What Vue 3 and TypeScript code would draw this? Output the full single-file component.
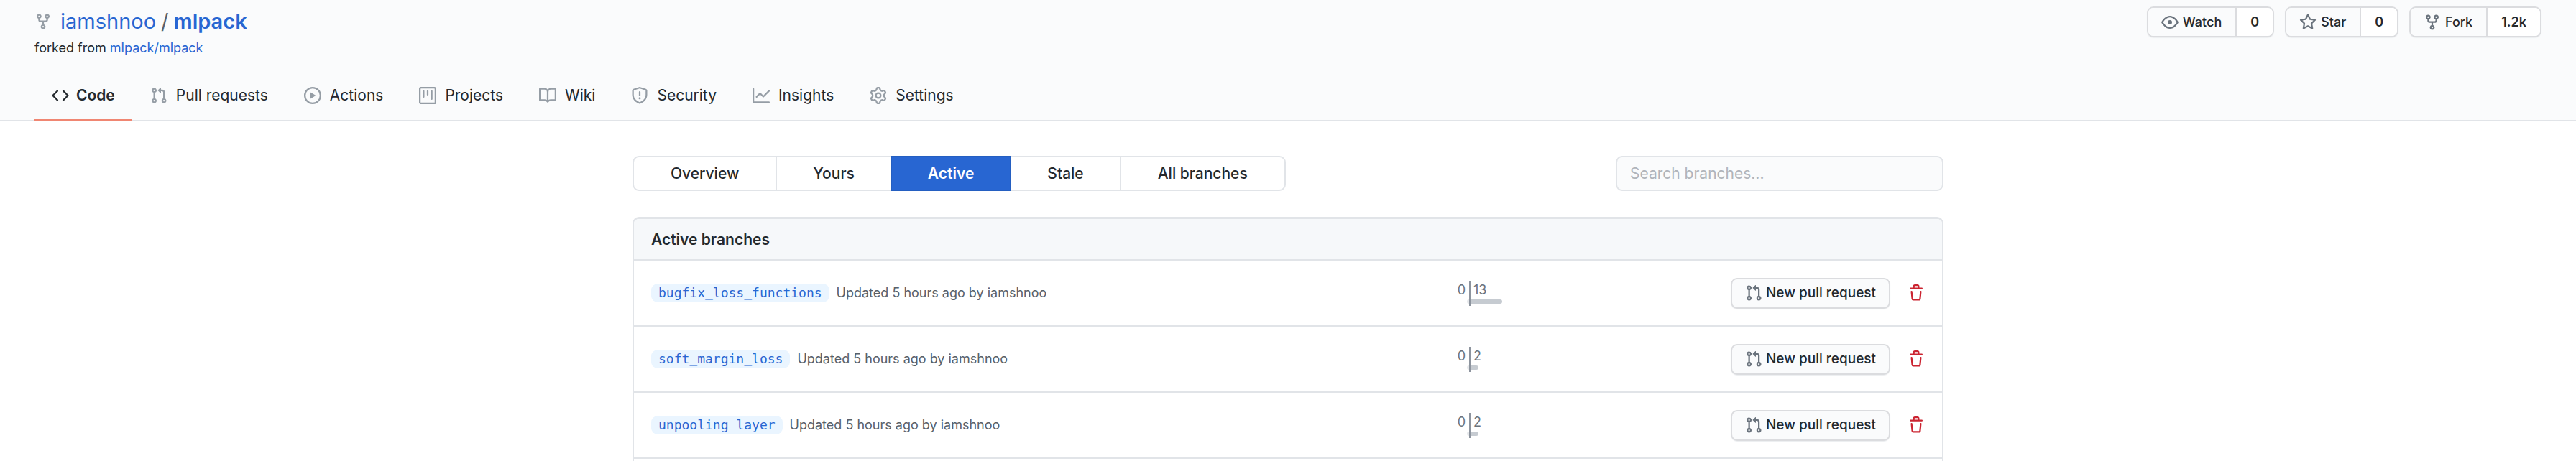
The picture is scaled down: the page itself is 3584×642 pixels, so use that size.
<script setup lang="ts">
import { ref } from 'vue'

const icons = {
  fork: 'M5 3.25a.75.75 0 11-1.5 0 .75.75 0 011.5 0zm0 2.122a2.25 2.25 0 10-1.5 0v.878A2.25 2.25 0 005.75 8.5h1.5v2.128a2.251 2.251 0 101.5 0V8.5h1.5a2.25 2.25 0 002.25-2.25v-.878a2.25 2.25 0 10-1.5 0v.878a.75.75 0 01-.75.75h-4.5A.75.75 0 015 6.25v-.878zm3.75 7.378a.75.75 0 11-1.5 0 .75.75 0 011.5 0zm3-8.75a.75.75 0 100-1.5.75.75 0 000 1.5z',
  code: 'M4.72 3.22a.75.75 0 011.06 1.06L2.06 8l3.72 3.72a.75.75 0 11-1.06 1.06L.47 8.53a.75.75 0 010-1.06l4.25-4.25zm6.56 0a.75.75 0 10-1.06 1.06L13.94 8l-3.72 3.72a.75.75 0 101.06 1.06l4.25-4.25a.75.75 0 000-1.06l-4.25-4.25z',
  pull: 'M7.177 3.073L9.573.677A.25.25 0 0110 .854v4.792a.25.25 0 01-.427.177L7.177 3.427a.25.25 0 010-.354zM3.75 2.5a.75.75 0 100 1.5.75.75 0 000-1.5zm-2.25.75a2.25 2.25 0 113 2.122v5.256a2.251 2.251 0 11-1.5 0V5.372A2.25 2.25 0 011.5 3.25zM11 2.5h-1V4h1a1 1 0 011 1v5.628a2.251 2.251 0 101.5 0V5A2.5 2.5 0 0011 2.5zm1 10.25a.75.75 0 111.5 0 .75.75 0 01-1.5 0zM3.75 12a.75.75 0 100 1.5.75.75 0 000-1.5z',
  play: 'M1.5 8a6.5 6.5 0 1113 0 6.5 6.5 0 01-13 0zM8 0a8 8 0 100 16A8 8 0 008 0zM6.379 5.227A.25.25 0 006 5.442v5.117a.25.25 0 00.379.214l4.264-2.559a.25.25 0 000-.428L6.379 5.227z',
  project: 'M1.75 0A1.75 1.75 0 000 1.75v12.5C0 15.216.784 16 1.75 16h12.5A1.75 1.75 0 0016 14.25V1.75A1.75 1.75 0 0014.25 0H1.75zM1.5 1.75a.25.25 0 01.25-.25h12.5a.25.25 0 01.25.25v12.5a.25.25 0 01-.25.25H1.75a.25.25 0 01-.25-.25V1.75zM11.75 3a.75.75 0 00-.75.75v7.5a.75.75 0 001.5 0v-7.5a.75.75 0 00-.75-.75zm-8.25.75a.75.75 0 011.5 0v5.5a.75.75 0 01-1.5 0v-5.5zM8 3a.75.75 0 00-.75.75v3.5a.75.75 0 001.5 0v-3.5A.75.75 0 008 3z',
  book: 'M0 1.75A.75.75 0 01.75 1h4.253c1.227 0 2.317.59 3 1.501A3.744 3.744 0 0111.006 1h4.245a.75.75 0 01.75.75v10.5a.75.75 0 01-.75.75h-4.507a2.25 2.25 0 00-1.591.659l-.622.621a.75.75 0 01-1.06 0l-.622-.621A2.25 2.25 0 005.258 13H.75a.75.75 0 01-.75-.75V1.75zm8.755 3a2.25 2.25 0 012.25-2.25H14.5v9h-3.757c-.71 0-1.4.201-1.992.572l.004-7.322zm-1.504 7.324l.004-5.073-.002-2.253A2.25 2.25 0 005.003 2.5H1.5v9h3.757a3.75 3.75 0 011.994.574z',
  shield: 'M7.467.133a1.75 1.75 0 011.066 0l5.25 1.68A1.75 1.75 0 0115 3.48V7c0 1.566-.32 3.182-1.303 4.682-.983 1.498-2.585 2.813-5.032 3.855a1.7 1.7 0 01-1.33 0c-2.447-1.042-4.049-2.357-5.032-3.855C1.32 10.182 1 8.566 1 7V3.48a1.75 1.75 0 011.217-1.667l5.25-1.68zm.61 1.429a.25.25 0 00-.153 0l-5.25 1.68a.25.25 0 00-.174.238V7c0 1.358.275 2.666 1.057 3.86.784 1.194 2.121 2.34 4.366 3.297a.2.2 0 00.154 0c2.245-.956 3.582-2.104 4.366-3.298C13.225 9.666 13.5 8.36 13.5 7V3.48a.25.25 0 00-.174-.237l-5.25-1.68zM9 10.5a1 1 0 11-2 0 1 1 0 012 0zm-.25-5.75a.75.75 0 10-1.5 0v3a.75.75 0 001.5 0v-3z',
  graph: 'M1.5 1.75a.75.75 0 00-1.5 0v12.5c0 .414.336.75.75.75h14.5a.75.75 0 000-1.5H1.5V1.75zm14.28 2.53a.75.75 0 00-1.06-1.06L10 7.94 7.53 5.47a.75.75 0 00-1.06 0L3.22 8.72a.75.75 0 001.06 1.06L7 7.06l2.47 2.47a.75.75 0 001.06 0l5.25-5.25z',
  gear: 'M7.429 1.525a6.593 6.593 0 011.142 0c.036.003.108.036.137.146l.289 1.105c.147.56.55.967.997 1.189.174.086.341.183.501.29.417.278.97.423 1.53.27l1.102-.303c.11-.03.175.016.195.046.219.31.41.641.573.989.014.031.022.11-.059.19l-.815.806c-.411.406-.562.957-.53 1.456a4.588 4.588 0 010 .582c-.032.499.119 1.05.53 1.456l.815.806c.08.08.073.159.059.19a6.494 6.494 0 01-.573.99c-.02.029-.086.074-.195.045l-1.103-.303c-.559-.153-1.112-.008-1.529.27-.16.107-.327.204-.5.29-.449.222-.851.628-.998 1.189l-.289 1.105c-.029.11-.101.143-.137.146a6.613 6.613 0 01-1.142 0c-.036-.003-.108-.037-.137-.146l-.289-1.105c-.147-.56-.55-.967-.997-1.189a4.502 4.502 0 01-.501-.29c-.417-.278-.97-.423-1.53-.27l-1.102.303c-.11.03-.175-.016-.195-.046a6.492 6.492 0 01-.573-.989c-.014-.031-.022-.11.059-.19l.815-.806c.411-.406.562-.957.53-1.456a4.587 4.587 0 010-.582c.032-.499-.119-1.05-.53-1.456l-.815-.806c-.08-.08-.073-.159-.059-.19a6.44 6.44 0 01.573-.99c.02-.029.086-.075.195-.045l1.103.303c.559.153 1.112.008 1.529-.27.16-.107.327-.204.5-.29.449-.222.851-.628.998-1.189l.289-1.105c.029-.11.101-.143.137-.146zM8 0c-.236 0-.47.01-.701.03-.743.065-1.29.615-1.458 1.261l-.29 1.106c-.017.066-.078.158-.211.224a5.994 5.994 0 00-.668.386c-.123.082-.233.09-.3.071L3.27 2.776c-.644-.177-1.392.02-1.82.63a7.977 7.977 0 00-.704 1.217c-.315.675-.111 1.422.363 1.891l.815.806c.05.048.098.147.088.294a6.084 6.084 0 000 .772c.01.147-.038.246-.088.294l-.815.806c-.474.469-.678 1.216-.363 1.891.2.428.436.835.704 1.218.428.609 1.176.806 1.82.63l1.103-.303c.066-.019.176-.011.299.071.213.143.436.272.668.386.133.066.194.158.212.224l.289 1.106c.169.646.715 1.196 1.458 1.26a8.094 8.094 0 001.402 0c.743-.064 1.29-.614 1.458-1.26l.29-1.106c.017-.066.078-.158.211-.224a5.98 5.98 0 00.668-.386c.123-.082.233-.09.3-.071l1.102.302c.644.177 1.392-.02 1.82-.63.268-.382.505-.789.704-1.217.315-.675.111-1.422-.364-1.891l-.814-.806c-.05-.048-.098-.147-.088-.294a6.1 6.1 0 000-.772c-.01-.147.039-.246.088-.294l.814-.806c.475-.469.679-1.216.364-1.891a7.992 7.992 0 00-.704-1.218c-.428-.609-1.176-.806-1.82-.63l-1.103.303c-.066.019-.176.011-.299-.071a5.991 5.991 0 00-.668-.386c-.133-.066-.194-.158-.212-.224L10.16 1.29C9.99.645 9.444.095 8.701.031A8.094 8.094 0 008 0zm1.5 8a1.5 1.5 0 11-3 0 1.5 1.5 0 013 0zM11 8a3 3 0 11-6 0 3 3 0 016 0z',
  eye: 'M1.679 7.932c.412-.621 1.242-1.75 2.366-2.717C5.175 4.242 6.527 3.5 8 3.5c1.473 0 2.824.742 3.955 1.715 1.124.967 1.954 2.096 2.366 2.717a.119.119 0 010 .136c-.412.621-1.242 1.75-2.366 2.717C10.825 11.758 9.473 12.5 8 12.5c-1.473 0-2.824-.742-3.955-1.715C2.92 9.818 2.09 8.69 1.679 8.068a.119.119 0 010-.136zM8 2c-1.981 0-3.67.992-4.933 2.078C1.797 5.169.88 6.423.43 7.1a1.619 1.619 0 000 1.798c.45.678 1.367 1.932 2.637 3.024C4.329 13.008 6.019 14 8 14c1.981 0 3.67-.992 4.933-2.078 1.27-1.091 2.187-2.345 2.637-3.023a1.619 1.619 0 000-1.798c-.45-.678-1.367-1.932-2.637-3.023C11.671 2.992 9.981 2 8 2zm0 8a2 2 0 100-4 2 2 0 000 4z',
  star: 'M8 .25a.75.75 0 01.673.418l1.882 3.815 4.21.612a.75.75 0 01.416 1.279l-3.046 2.97.719 4.192a.75.75 0 01-1.088.791L8 12.347l-3.766 1.98a.75.75 0 01-1.088-.79l.72-4.194L.818 6.374a.75.75 0 01.416-1.28l4.21-.611L7.327.668A.75.75 0 018 .25zm0 2.445L6.615 5.5a.75.75 0 01-.564.41l-3.097.45 2.24 2.184a.75.75 0 01.216.664l-.528 3.084 2.769-1.456a.75.75 0 01.698 0l2.77 1.456-.53-3.084a.75.75 0 01.216-.664l2.24-2.183-3.096-.45a.75.75 0 01-.564-.41L8 2.694v.001z',
  trash: 'M6.5 1.75a.25.25 0 01.25-.25h2.5a.25.25 0 01.25.25V3h-3V1.75zm4.5 0V3h2.25a.75.75 0 010 1.5H2.75a.75.75 0 010-1.5H5V1.75C5 .784 5.784 0 6.75 0h2.5C10.216 0 11 .784 11 1.75zM4.496 6.675a.75.75 0 10-1.492.15l.66 6.6A1.75 1.75 0 005.405 15h5.19c.9 0 1.652-.681 1.741-1.576l.66-6.6a.75.75 0 00-1.492-.149l-.66 6.6a.25.25 0 01-.249.225h-5.19a.25.25 0 01-.249-.225l-.66-6.6z',
}

type IconName = keyof typeof icons

interface Tab {
  label: string
  icon: IconName
}

interface SocialAction {
  label: string
  icon: IconName
  count: string
}

interface Branch {
  name: string
  behind: number
  ahead: number
  barWidth: number
}

const tabs: Tab[] = [
  { label: 'Code', icon: 'code' },
  { label: 'Pull requests', icon: 'pull' },
  { label: 'Actions', icon: 'play' },
  { label: 'Projects', icon: 'project' },
  { label: 'Wiki', icon: 'book' },
  { label: 'Security', icon: 'shield' },
  { label: 'Insights', icon: 'graph' },
  { label: 'Settings', icon: 'gear' },
]

const social: SocialAction[] = [
  { label: 'Watch', icon: 'eye', count: '0' },
  { label: 'Star', icon: 'star', count: '0' },
  { label: 'Fork', icon: 'fork', count: '1.2k' },
]

const filters = ['Overview', 'Yours', 'Active', 'Stale', 'All branches']
const activeFilter = ref('Active')
const query = ref('')

const branches: Branch[] = [
  { name: 'bugfix_loss_functions', behind: 0, ahead: 13, barWidth: 44 },
  { name: 'soft_margin_loss', behind: 0, ahead: 2, barWidth: 11 },
  { name: 'unpooling_layer', behind: 0, ahead: 2, barWidth: 11 },
]
</script>

<template>
  <div class="page">
    <header class="repo-head">
      <div class="repo-top">
        <div class="repo-name">
          <h1 class="title">
            <svg class="icon muted" viewBox="0 0 16 16" aria-hidden="true"><path fill-rule="evenodd" :d="icons.fork" /></svg>
            <span class="path">
              <a href="#">iamshnoo</a>
              <span class="slash">/</span>
              <a class="repo" href="#">mlpack</a>
            </span>
          </h1>
          <p class="forked">forked from <a href="#">mlpack/mlpack</a></p>
        </div>
        <ul class="social">
          <li v-for="item in social" :key="item.label" class="social-item">
            <button type="button" class="social-btn">
              <svg class="icon" viewBox="0 0 16 16" aria-hidden="true"><path fill-rule="evenodd" :d="icons[item.icon]" /></svg>
              {{ item.label }}
            </button>
            <a class="social-count" href="#">{{ item.count }}</a>
          </li>
        </ul>
      </div>
      <nav class="tabs" aria-label="Repository">
        <a
          v-for="(tab, i) in tabs"
          :key="tab.label"
          href="#"
          class="tab"
          :class="{ selected: i === 0 }"
        >
          <svg class="icon" viewBox="0 0 16 16" aria-hidden="true"><path fill-rule="evenodd" :d="icons[tab.icon]" /></svg>
          <span>{{ tab.label }}</span>
        </a>
      </nav>
    </header>

    <main class="content">
      <div class="toolbar">
        <nav class="filters" aria-label="Branch filter">
          <a
            v-for="name in filters"
            :key="name"
            href="#"
            class="filter"
            :class="{ active: name === activeFilter }"
            @click.prevent="activeFilter = name"
          >{{ name }}</a>
        </nav>
        <input v-model="query" class="search" type="text" placeholder="Search branches..." aria-label="Search branches" />
      </div>

      <section class="panel">
        <h2 class="panel-head">Active branches</h2>
        <ul class="rows">
          <li v-for="branch in branches" :key="branch.name" class="row">
            <div class="branch">
              <a class="branch-name" href="#">{{ branch.name }}</a>
              <span class="updated">Updated 5 hours ago by iamshnoo</span>
            </div>
            <div class="diverge">
              <div class="behind">
                <span class="count">{{ branch.behind }}</span>
                <span class="meter"></span>
              </div>
              <div class="ahead">
                <span class="count">{{ branch.ahead }}</span>
                <span class="meter" :style="{ width: branch.barWidth + 'px' }"></span>
              </div>
            </div>
            <div class="actions">
              <button type="button" class="pr-btn">
                <svg class="icon" viewBox="0 0 16 16" aria-hidden="true"><path fill-rule="evenodd" :d="icons.pull" /></svg>
                New pull request
              </button>
              <button type="button" class="delete" aria-label="Delete this branch">
                <svg class="icon" viewBox="0 0 16 16" aria-hidden="true"><path fill-rule="evenodd" :d="icons.trash" /></svg>
              </button>
            </div>
          </li>
        </ul>
      </section>
    </main>
  </div>
</template>

<style>
body {
  background: #fff;
}
</style>

<style scoped>
.page {
  font-family: Inter, "Liberation Sans", sans-serif;
  font-size: 21px;
  line-height: 32px;
  color: #24292e;
}

.page * {
  box-sizing: border-box;
}

h1,
h2,
p,
ul {
  margin: 0;
  padding: 0;
  list-style: none;
}

a {
  color: #2866d2;
  text-decoration: none;
}

button,
input {
  font: inherit;
  color: inherit;
}

.icon {
  display: block;
  flex: none;
  width: 24px;
  height: 24px;
  fill: currentColor;
}

.muted {
  color: #959da5;
}

.repo-head {
  background: #fafbfc;
  border-bottom: 2px solid #e1e4e8;
}

.repo-top {
  display: flex;
  justify-content: space-between;
  align-items: flex-start;
  padding: 9px 48px 0;
}

.title {
  display: flex;
  align-items: center;
  gap: 12px;
  font-size: 29px;
  line-height: 42px;
  font-weight: 400;
}

.path {
  display: flex;
  gap: 7px;
}

.slash {
  color: #586069;
}

.repo {
  font-weight: 600;
}

.forked {
  font-size: 18px;
  line-height: 32px;
}

.social {
  display: flex;
  gap: 15px;
  font-size: 18px;
  line-height: 30px;
}

.social-item {
  display: flex;
  height: 43px;
  border: 2px solid #dbdcdf;
  border-radius: 9px;
  box-shadow: 0 1px 1px #eceef0;
  overflow: hidden;
}

.social-btn {
  display: flex;
  align-items: center;
  gap: 6px;
  padding: 0 19px 0 18px;
  border: 0;
  background: #fafbfc;
  font-weight: 500;
}

.social-btn .icon,
.pr-btn .icon {
  color: #6a737d;
}

.social-count {
  display: flex;
  align-items: center;
  padding: 0 19px;
  border-left: 2px solid #dbdcdf;
  background: #fff;
  color: #24292e;
  font-weight: 600;
}

.tabs {
  display: flex;
  margin-top: 17px;
  padding: 0 48px;
}

.tab {
  display: flex;
  align-items: center;
  gap: 12px;
  height: 69px;
  margin-bottom: -2px;
  padding: 0 25px;
  border-bottom: 3px solid transparent;
  color: #24292e;
}

.tab .icon {
  color: #959da5;
}

.tab.selected {
  gap: 10px;
  padding: 0 24px;
  border-bottom-color: #f08672;
  font-weight: 600;
}

.tab.selected .icon {
  color: #24292e;
}

.content {
  width: 100%;
  max-width: 1824px;
  margin: 0 auto;
  padding-top: 48px;
}

.toolbar {
  display: flex;
  justify-content: space-between;
  margin-bottom: 36px;
}

.filters {
  display: flex;
}

.filter {
  height: 49px;
  padding: 0 50px;
  border: 2px solid #e1e4e8;
  line-height: 45px;
  color: #24292e;
  font-weight: 500;
}

.filter + .filter {
  margin-left: -2px;
}

.filter:first-child {
  padding: 0 51px;
  border-radius: 9px 0 0 9px;
}

.filter:last-child {
  padding: 0 51px;
  border-radius: 0 9px 9px 0;
}

.filter.active {
  z-index: 1;
  border-color: #245fc1;
  background: #2866d2;
  color: #fff;
  font-weight: 600;
}

.search {
  width: 25%;
  height: 49px;
  padding: 0 18px;
  border: 2px solid #e1e4e8;
  border-radius: 9px;
  background: #fafbfc;
  outline: none;
}

.search::placeholder {
  color: #b0b4ba;
  opacity: 1;
}

.panel {
  padding-bottom: 3px;
  border: 2px solid #e1e4e8;
  border-top-width: 3px;
  border-bottom: 0;
  border-radius: 9px 9px 0 0;
  overflow: hidden;
}

.panel-head {
  padding: 13px 24px 11px;
  border-bottom: 2px solid #e1e4e8;
  background: #f6f8fa;
  font-size: 21px;
  line-height: 32px;
  font-weight: 600;
}

.row {
  display: grid;
  grid-template-columns: minmax(0, 1fr) 130px 568px;
  align-items: center;
  height: 92px;
  padding: 0 24px;
  border-bottom: 2px solid #e1e4e8;
}

.branch {
  display: flex;
  align-items: center;
  gap: 10px;
  font-size: 18px;
  line-height: 26px;
}

.branch-name {
  padding: 0 10px;
  border-radius: 9px;
  background: #eaf5ff;
  font-family: "DejaVu Sans Mono", "Liberation Mono", monospace;
}

.updated {
  color: #586069;
}

.diverge {
  display: grid;
  grid-template-columns: 1fr 1fr;
  font-size: 18px;
  line-height: 26px;
  color: #6a737d;
}

.behind,
.ahead {
  display: flex;
  flex-direction: column;
  height: 35px;
}

.behind {
  align-items: flex-end;
  border-right: 1px solid #8d949e;
}

.ahead {
  border-left: 1px solid #8d949e;
}

.behind .count {
  padding-right: 5px;
}

.ahead .count {
  padding-left: 4px;
}

.meter {
  height: 6px;
}

.behind .meter {
  width: 3px;
  border-radius: 3px 0 0 3px;
  background: #e6e8eb;
}

.ahead .meter {
  border-radius: 0 3px 3px 0;
  background: #c6cbd1;
}

.actions {
  display: flex;
  justify-content: flex-end;
  align-items: center;
  gap: 24px;
}

.pr-btn {
  display: flex;
  align-items: center;
  gap: 5px;
  height: 43px;
  padding: 0 18px;
  border: 2px solid #dbdcdf;
  border-radius: 9px;
  background: #fafbfc;
  box-shadow: 0 1px 1px #eceef0;
  font-size: 19px;
  font-weight: 500;
}

.delete {
  padding: 0;
  border: 0;
  background: none;
  color: #cb2431;
}
</style>
